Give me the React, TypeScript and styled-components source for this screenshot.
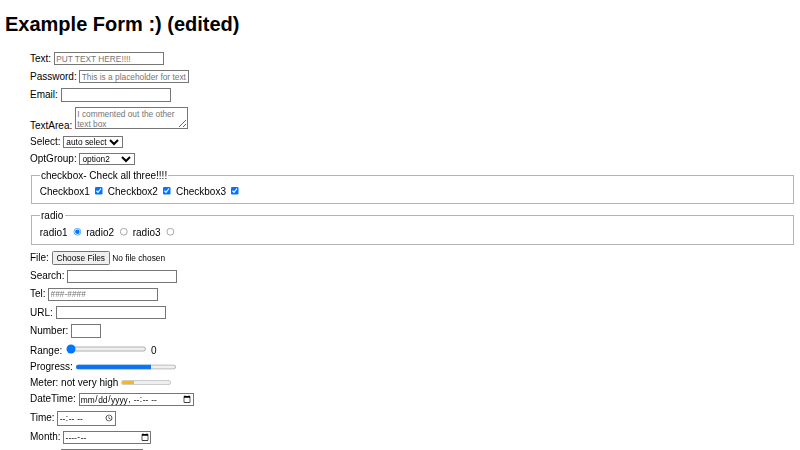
import React from 'react';
import styled, { createGlobalStyle } from 'styled-components';

const GlobalStyle = createGlobalStyle`
  html {
    zoom: 0.625;
  }
  body {
    margin: 0;
    font-family: "Liberation Sans", Arial, sans-serif;
    background: #ffffff;
    color: #000000;
  }
  input, select, textarea, button {
    font-family: "Liberation Sans", Arial, sans-serif;
  }
`;

const Page = styled.div`
  padding: 0 8px;
`;

const Title = styled.h1`
  font-size: 32px;
  line-height: 37px;
  margin: 21px 0 0;
`;

const Form = styled.form`
  padding: 17px 0 0 40px;
`;

const Row = styled.div`
  margin-top: 8px;
`;

const Group = styled.fieldset`
  margin: 8px 2px 10px;
  padding-top: 7px;
  border: 2px solid #b4b4b4;
`;

const Field = styled.input<{ $width?: number }>`
  box-sizing: border-box;
  width: ${({ $width }) => $width ?? 176}px;
`;

const TextArea = styled.textarea`
  box-sizing: border-box;
  width: 181px;
  height: 35px;
`;

const App: React.FC = () => {
  return (
    <Page>
      <GlobalStyle />
      <Title>Example Form :) (edited)</Title>
      <Form onSubmit={(e) => e.preventDefault()}>
        <Row>
          <label>
            Text: <Field type="text" placeholder="PUT TEXT HERE!!!!" />
          </label>
        </Row>
        <Row>
          <label>
            Password: <Field type="password" placeholder="This is a placeholder for text" />
          </label>
        </Row>
        <Row>
          <label>
            Email: <Field type="email" />
          </label>
        </Row>
        <Row>
          <label>
            TextArea: <TextArea placeholder="I commented out the other text box" />
          </label>
        </Row>
        <Row>
          <label>
            Select:{' '}
            <select defaultValue="auto">
              <option value="auto">auto select</option>
              <option value="one">one</option>
              <option value="two">two</option>
            </select>
          </label>
        </Row>
        <Row>
          <label>
            OptGroup:{' '}
            <select defaultValue="option2">
              <optgroup label="Group 1">
                <option value="option1">option1</option>
                <option value="option2">option2</option>
              </optgroup>
              <optgroup label="Group 2">
                <option value="option3">option3</option>
                <option value="option4">option4</option>
              </optgroup>
            </select>
          </label>
        </Row>
        <Group>
          <legend>checkbox- Check all three!!!!</legend>
          Checkbox1 <input type="checkbox" defaultChecked /> Checkbox2{' '}
          <input type="checkbox" defaultChecked /> Checkbox3 <input type="checkbox" defaultChecked />
        </Group>
        <Group>
          <legend>radio</legend>
          radio1 <input type="radio" name="radio" defaultChecked /> radio2{' '}
          <input type="radio" name="radio" /> radio3 <input type="radio" name="radio" />
        </Group>
        <Row>
          <label>
            File: <input type="file" multiple />
          </label>
        </Row>
        <Row>
          <label>
            Search: <Field type="search" />
          </label>
        </Row>
        <Row>
          <label>
            Tel: <Field type="tel" placeholder="###-####" />
          </label>
        </Row>
        <Row>
          <label>
            URL: <Field type="url" />
          </label>
        </Row>
        <Row>
          <label>
            Number: <Field type="number" $width={48} />
          </label>
        </Row>
        <Row>
          <label>
            Range: <input type="range" min={0} max={100} defaultValue={0} /> 0
          </label>
        </Row>
        <Row>
          <label>
            Progress: <progress value={75} max={100} />
          </label>
        </Row>
        <Row>
          <label>
            Meter: not very high{' '}
            <meter value={0.25} min={0} max={1} low={0.33} high={0.66} optimum={0.5} />
          </label>
        </Row>
        <Row>
          <label>
            DateTime: <Field type="datetime-local" $width={184} />
          </label>
        </Row>
        <Row>
          <label>
            Time: <Field type="time" $width={94} />
          </label>
        </Row>
        <Row>
          <label>
            Month: <Field type="month" $width={141} />
          </label>
        </Row>
        <Row>
          <label>
            Week: <Field type="week" $width={131} />
          </label>
        </Row>
        <Row>
          <label>
            Color: <input type="color" />
          </label>
        </Row>
      </Form>
    </Page>
  );
};

export default App;
